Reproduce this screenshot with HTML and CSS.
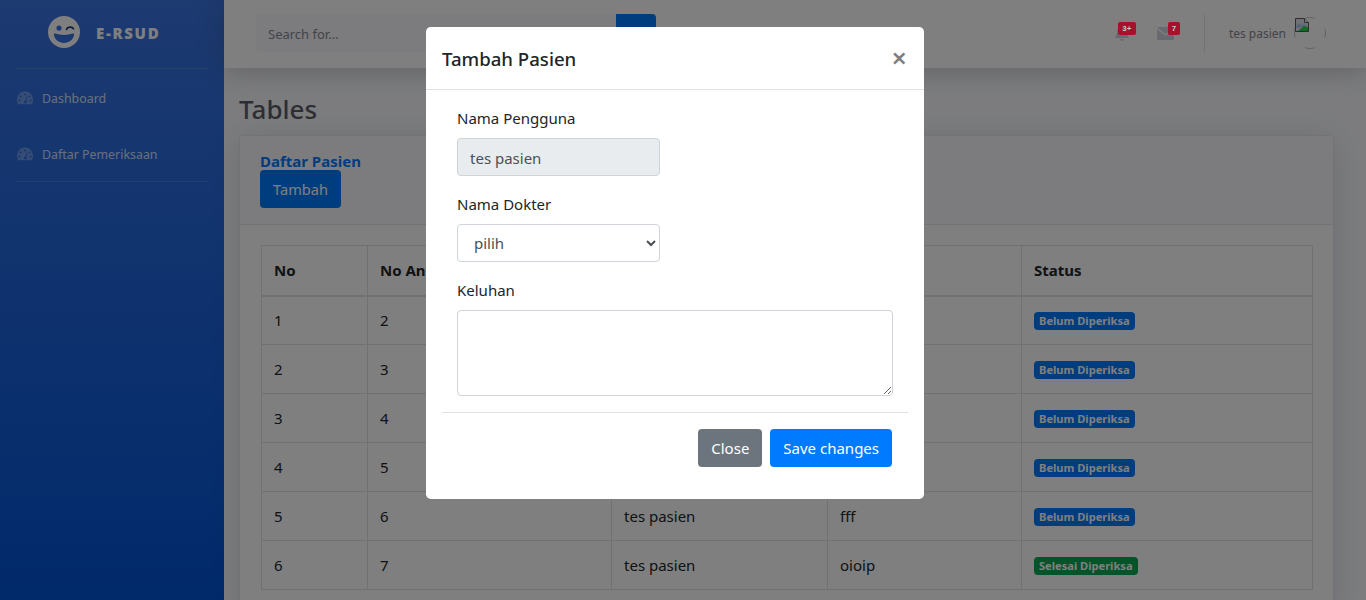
FILE: index.html
```html
<!DOCTYPE html>
<html lang="en">

    <head>
        <meta charset="UTF-8">
        <meta name="viewport" content="width=device-width, initial-scale=1.0">
        <title>Tables</title>
        <link rel="stylesheet" href="styles.css">
    </head>

    <body>
        <div class="wrapper">
            <aside class="sidebar">
                <div class="brand">
                    <svg class="brand-icon" viewBox="0 0 32 32" aria-hidden="true">
                        <path fill-rule="evenodd" d="M16 0a16 16 0 1 0 0 32a16 16 0 0 0 0-32zM11 9.500a2.600 2.600 0 1 1 0 5.200a2.600 2.600 0 0 1 0-5.200zM7.200 17.600c5.600 1.800 12 1.800 17.600 0c.8-.2 1.400.4 1.300 1.200c-.7 4.800-5 8.200-10.100 8.200s-9.400-3.400-10.100-8.200c-.1-.8.5-1.400 1.300-1.200z"/>
                        <path d="M18.500 13.500c.6-2.600 5.400-3.400 7-.7" fill="none" stroke="#1c3a72" stroke-width="1.700" stroke-linecap="round"/>
                    </svg>
                    <span class="brand-text">E-RSUD</span>
                </div>
                <hr class="sidebar-line">
                <a class="nav-item" href="#">
                    <svg class="nav-icon" viewBox="0 0 16 14" aria-hidden="true">
                        <path fill-rule="evenodd" d="M8 .5a8 8 0 0 0-8 8c0 1.900.5 3.500 1.300 4.800h13.400c.8-1.300 1.300-2.900 1.300-4.800a8 8 0 0 0-8-8zM8 2.500a1 1 0 1 1 0 2a1 1 0 0 1 0-2zM3.500 4.500a1 1 0 1 1 0 2a1 1 0 0 1 0-2zM2.500 8.500a1 1 0 1 1 0 2a1 1 0 0 1 0-2zM13.500 8.500a1 1 0 1 1 0 2a1 1 0 0 1 0-2zM12.500 4.500a1 1 0 1 1 0 2a1 1 0 0 1 0-2zM9.800 5.200l.7.3l-1.300 4a1.500 1.500 0 1 1-1-.1z"/>
                    </svg>
                    <span>Dashboard</span>
                </a>
                <a class="nav-item" href="#">
                    <svg class="nav-icon" viewBox="0 0 16 14" aria-hidden="true">
                        <path fill-rule="evenodd" d="M8 .5a8 8 0 0 0-8 8c0 1.900.5 3.500 1.300 4.800h13.400c.8-1.300 1.300-2.900 1.300-4.800a8 8 0 0 0-8-8zM8 2.500a1 1 0 1 1 0 2a1 1 0 0 1 0-2zM3.500 4.500a1 1 0 1 1 0 2a1 1 0 0 1 0-2zM2.500 8.500a1 1 0 1 1 0 2a1 1 0 0 1 0-2zM13.500 8.500a1 1 0 1 1 0 2a1 1 0 0 1 0-2zM12.500 4.500a1 1 0 1 1 0 2a1 1 0 0 1 0-2zM9.800 5.200l.7.3l-1.300 4a1.500 1.500 0 1 1-1-.1z"/>
                    </svg>
                    <span>Daftar Pemeriksaan</span>
                </a>
                <hr class="sidebar-line">
            </aside>

            <div class="main">
                <header class="topbar">
                    <form class="search">
                        <input class="search-input" type="text" placeholder="Search for...">
                        <button class="search-btn" type="button"></button>
                    </form>
                    <div class="top-right">
                        <div class="top-icon top-icon-bell">
                            <svg class="bell" viewBox="0 0 14 16" aria-hidden="true">
                                <path d="M7 0a1 1 0 0 1 1 1v.7c2.300.5 4 2.500 4 4.900c0 3.300 1 4.300 1.700 5c.4.500.1 1.400-.7 1.400H1c-.8 0-1.100-.9-.7-1.400C1 11 2 10 2 6.600c0-2.400 1.700-4.400 4-4.900V1a1 1 0 0 1 1-1zM5 14h4a2 2 0 0 1-4 0z"/>
                            </svg>
                            <span class="count count-bell">3+</span>
                        </div>
                        <div class="top-icon">
                            <svg class="mail" viewBox="0 0 17 13" aria-hidden="true">
                                <path d="M1.500 0h14c.6 0 1.100.3 1.300.8L8.500 7L.2.800C.4.300.9 0 1.500 0zM0 2.400l8.500 6.200L17 2.400v9.100c0 .8-.7 1.500-1.500 1.500h-14C.7 13 0 12.300 0 11.500z"/>
                            </svg>
                            <span class="count count-mail">7</span>
                        </div>
                        <div class="top-divider"></div>
                        <span class="user-name">tes pasien</span>
                        <svg class="avatar" viewBox="0 0 32 32" aria-hidden="true">
                            <circle class="avatar-ring" cx="16" cy="16" r="15.500"/>
                            <path d="M1.500 1.500h9l4 4v9h-13z" fill="#dfe6ee" stroke="#5a5a5a"/>
                            <path d="M10.500 1.500v4h4" fill="#fff" stroke="#5a5a5a"/>
                            <path d="M2 9l3-3l3 2.500l2-1.500l4 2.500v1H2z" fill="#b4c8f0"/>
                            <path d="M4 14l6-5l4 1.500V14z" fill="#20d844"/>
                        </svg>
                    </div>
                </header>

                <main class="content">
                    <h1 class="page-title">Tables</h1>
                    <section class="card">
                        <div class="card-head">
                            <h6 class="card-title">Daftar Pasien</h6>
                            <button class="btn-add" type="button">Tambah</button>
                        </div>
                        <div class="card-body">
                            <table class="data-table">
                                <colgroup>
                                    <col class="col-no">
                                    <col class="col-queue">
                                    <col class="col-name">
                                    <col class="col-note">
                                    <col>
                                </colgroup>
                                <thead>
                                    <tr><th>No</th><th>No Antrian</th><th>Nama Pasien</th><th>Keluhan</th><th>Status</th></tr>
                                </thead>
                                <tbody>
                                    <tr><td>1</td><td>2</td><td>tes pasien</td><td>aaa</td><td><span class="pill pill-blue">Belum Diperiksa</span></td></tr>
                                    <tr><td>2</td><td>3</td><td>tes pasien</td><td>bbb</td><td><span class="pill pill-blue">Belum Diperiksa</span></td></tr>
                                    <tr><td>3</td><td>4</td><td>tes pasien</td><td>ccc</td><td><span class="pill pill-blue">Belum Diperiksa</span></td></tr>
                                    <tr><td>4</td><td>5</td><td>tes pasien</td><td>ddd</td><td><span class="pill pill-blue">Belum Diperiksa</span></td></tr>
                                    <tr><td>5</td><td>6</td><td>tes pasien</td><td>fff</td><td><span class="pill pill-blue">Belum Diperiksa</span></td></tr>
                                    <tr><td>6</td><td>7</td><td>tes pasien</td><td>oioip</td><td><span class="pill pill-green">Selesai Diperiksa</span></td></tr>
                                </tbody>
                            </table>
                        </div>
                    </section>
                </main>
            </div>
        </div>

        <div class="backdrop"></div>

        <div class="modal">
            <div class="modal-head">
                <h5 class="modal-title">Tambah Pasien</h5>
                <span class="modal-close">&times;</span>
            </div>
            <form class="modal-form">
                <label class="field-label" for="pengguna">Nama Pengguna</label>
                <input class="field field-short" id="pengguna" type="text" value="tes pasien" readonly>
                <label class="field-label" for="dokter">Nama Dokter</label>
                <select class="field field-short field-select" id="dokter">
                    <option>pilih</option>
                </select>
                <label class="field-label" for="keluhan">Keluhan</label>
                <textarea class="field field-area" id="keluhan"></textarea>
            </form>
            <div class="modal-foot">
                <button class="btn btn-grey" type="button">Close</button>
                <button class="btn btn-blue" type="button">Save changes</button>
            </div>
        </div>
    </body>

</html>
```

FILE: styles.css
```css
* {
    box-sizing: border-box;
}

html,
body {
    height: 100%;
}

body {
    margin: 0;
    font-family: "Noto Sans", Arial, sans-serif;
    font-size: 15px;
    color: #212529;
    background-color: #f8f9fc;
    overflow: hidden;
}

.wrapper {
    display: flex;
    height: 600px;
}

/* sidebar */
.sidebar {
    width: 224px;
    flex-shrink: 0;
    background: linear-gradient(180deg, #3a74e2 0%, #0254d6 100%);
    padding: 0 16px;
}

.brand {
    height: 68px;
    display: flex;
    align-items: center;
    padding-left: 32px;
    color: #fff;
}

.brand-icon {
    width: 32px;
    height: 32px;
    fill: #fff;
    margin-top: -4px;
}

.brand-text {
    margin: -2px 0 0 16px;
    font-family: "Open Sans", sans-serif;
    font-size: 15px;
    font-weight: 800;
    letter-spacing: 1.700px;
}

.sidebar-line {
    margin: 0;
    border: 0;
    border-top: 1px solid rgba(255, 255, 255, 0.15);
}

.nav-item {
    display: flex;
    align-items: center;
    height: 56px;
    padding-top: 2px;
    color: rgba(255, 255, 255, 0.8);
    text-decoration: none;
    font-size: 12.400px;
}

.nav-item span {
    margin-left: 9px;
}

.nav-icon {
    width: 16px;
    height: 14px;
    fill: rgba(255, 255, 255, 0.3);
    margin-left: 1px;
}

/* topbar */
.main {
    flex: 1;
    min-width: 0;
    display: flex;
    flex-direction: column;
}

.topbar {
    height: 68px;
    flex-shrink: 0;
    background: #fff;
    box-shadow: 0 2px 28px rgba(58, 59, 69, 0.3);
    display: flex;
    align-items: center;
    justify-content: space-between;
    padding: 0 40px 0 32px;
    position: relative;
}

.search {
    display: flex;
    margin-top: -2px;
}

.search-input {
    width: 360px;
    height: 38px;
    border: 0;
    border-radius: 4px 0 0 4px;
    background: #f8f9fc;
    padding: 2px 12px 0;
    font-family: inherit;
    font-size: 13px;
}

.search-input::placeholder {
    color: #858796;
}

.search-btn {
    width: 40px;
    height: 38px;
    border: 0;
    border-radius: 0 4px 4px 0;
    background: #007bff;
}

.top-right {
    display: flex;
    align-items: center;
    margin-top: -2px;
}

.top-icon {
    position: relative;
    display: flex;
}

.top-icon-bell {
    margin-right: 28px;
}

.bell {
    width: 14px;
    height: 16px;
    fill: #d1d3e2;
}

.mail {
    width: 17px;
    height: 13px;
    fill: #d1d3e2;
}

/* the counters sit over the backdrop in the original */
.count {
    position: absolute;
    z-index: 2;
    background: #a8102c;
    color: #c8c8c8;
    border-radius: 2px;
    font-family: "Liberation Sans", sans-serif;
    font-size: 8px;
    font-weight: 700;
    line-height: 13px;
    height: 13px;
    text-align: center;
}

.count-bell {
    top: -3px;
    left: 3px;
    width: 18px;
}

.count-mail {
    top: -5px;
    left: 11px;
    width: 12px;
}

.top-divider {
    width: 1px;
    height: 38px;
    background: #e3e6f0;
    margin: 0 24px 0 30px;
}

.user-name {
    font-size: 12px;
    color: #858796;
    margin-right: 8px;
}

.avatar {
    width: 32px;
    height: 32px;
    display: block;
}

.avatar-ring {
    fill: none;
    stroke: #c4c4c4;
    stroke-width: 1;
    stroke-dasharray: 10 14.350;
    stroke-dashoffset: 5;
}

/* content */
.content {
    padding: 0 32px 0 15px;
}

.page-title {
    margin: 24px 0 8px;
    font-size: 26px;
    font-weight: 500;
    line-height: 35px;
    color: #5a5c69;
}

.card {
    background: #fff;
    border: 1px solid #e3e6f0;
    border-radius: 5px;
    box-shadow: 0 4px 28px rgba(58, 59, 69, 0.15);
}

.card-head {
    height: 89px;
    padding: 16px 20px 0;
    background: #f8f9fc;
    border-bottom: 1px solid #e3e6f0;
}

.card-title {
    margin: 0;
    font-size: 15px;
    font-weight: 700;
    line-height: 18px;
    color: #007bff;
}

.btn-add {
    display: block;
    width: 81px;
    height: 38px;
    border: 0;
    border-radius: 4px;
    background: #007bff;
    color: #fff;
    font-family: inherit;
    font-size: 14.600px;
}

.card-body {
    padding: 20px 20px 20px 21px;
}

.data-table {
    width: 1052px;
    border-collapse: collapse;
    table-layout: fixed;
    font-size: 15px;
}

.col-no {
    width: 106px;
}

.col-queue {
    width: 244px;
}

.col-name {
    width: 216px;
}

.col-note {
    width: 194px;
}

.data-table th,
.data-table td {
    border: 1px solid #dee2e6;
    padding: 0 12px;
    height: 49px;
    text-align: left;
    color: #212529;
}

.data-table th {
    height: 50px;
    font-weight: 700;
    border-bottom: 2px solid #dee2e6;
}

.pill {
    display: inline-block;
    height: 18px;
    padding: 0 5px;
    border-radius: 4px;
    color: #fff;
    font-size: 11.100px;
    font-weight: 700;
    line-height: 18px;
    vertical-align: middle;
    margin-bottom: 1px;
}

.pill-blue {
    background: #007bff;
}

.pill-green {
    background: #06a850;
}

/* modal */
.backdrop {
    position: fixed;
    inset: 0;
    background: #000;
    opacity: 0.5;
}

.modal {
    position: fixed;
    top: 27px;
    left: 426px;
    width: 498px;
    height: 472px;
    background: #fff;
    border-radius: 4.800px;
}

.modal-head {
    height: 63px;
    display: flex;
    align-items: center;
    justify-content: space-between;
    padding: 0 16px;
    border-bottom: 1px solid #dee2e6;
}

.modal-title {
    margin: 0;
    font-size: 18.600px;
    font-weight: 500;
    color: #212529;
}

.modal-close {
    font-size: 27px;
    font-weight: 600;
    line-height: 1;
    color: #000;
    opacity: 0.5;
    margin: -1px 1px 0 0;
}

.modal-form {
    padding: 16px 31px 0;
}

.field-label {
    display: block;
    height: 24px;
    line-height: 24px;
    margin-bottom: 8px;
    font-size: 15px;
    color: #212529;
}

.field {
    display: block;
    border: 1px solid #ced4da;
    border-radius: 4px;
    font-family: inherit;
    font-size: 15px;
    color: #495057;
    margin-bottom: 16px;
}

.field-short {
    width: 203px;
    height: 38px;
    padding: 0 12px;
}

.field[readonly] {
    background: #e9ecef;
    outline: 0;
    padding-top: 2px;
}

.field-select {
    background: #fff;
}

.field-area {
    width: 436px;
    height: 86px;
    margin-bottom: 0;
}

.modal-foot {
    margin: 16px 16px 0;
    padding: 16px 16px 0 0;
    border-top: 1px solid #dee2e6;
    display: flex;
    justify-content: flex-end;
    gap: 8px;
}

.btn {
    height: 38px;
    padding: 0 13px;
    border: 0;
    border-radius: 4px;
    color: #fff;
    font-family: inherit;
    font-size: 15px;
}

.btn-grey {
    background: #6c757d;
}

.btn-blue {
    background: #007bff;
}
```
